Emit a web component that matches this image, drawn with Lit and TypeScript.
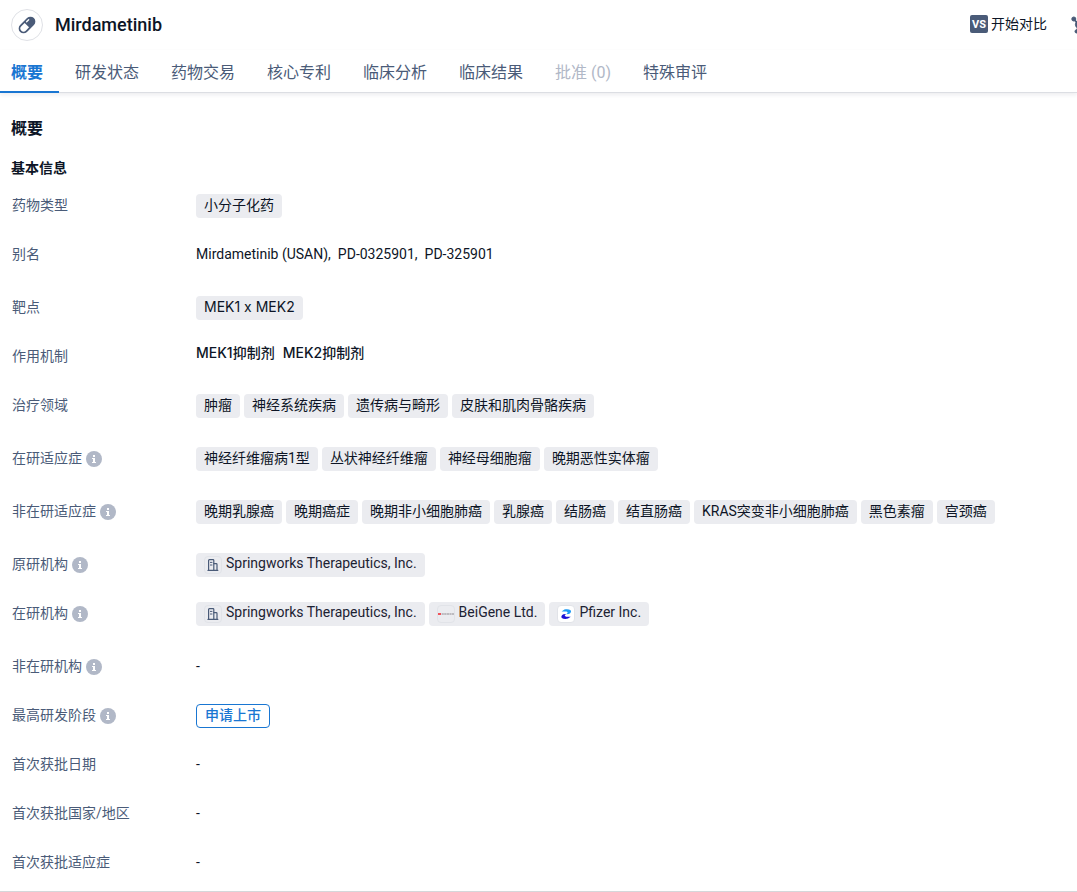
import { LitElement, html, css, svg, nothing, type TemplateResult } from "lit";
import { customElement, property, state } from "lit/decorators.js";
import { classMap } from "lit/directives/class-map.js";

interface Org {
  name: string;
  logo: "building" | "beigene" | "pfizer";
}

interface Row {
  label: string;
  info?: boolean;
  tall?: boolean;
  kind: "tags" | "target" | "text" | "links" | "orgs" | "stage";
  values?: string[];
  orgs?: Org[];
}

const SPRINGWORKS: Org = { name: "Springworks Therapeutics, Inc.", logo: "building" };

const TABS = [
  { label: "概要" },
  { label: "研发状态" },
  { label: "药物交易" },
  { label: "核心专利" },
  { label: "临床分析" },
  { label: "临床结果" },
  { label: "批准 (0)", disabled: true },
  { label: "特殊审评" },
];

const ROWS: Row[] = [
  { label: "药物类型", kind: "tags", values: ["小分子化药"] },
  { label: "别名", kind: "text", tall: true, values: ["Mirdametinib (USAN)", "PD-0325901", "PD-325901"] },
  { label: "靶点", kind: "target", values: ["MEK1 x MEK2"] },
  { label: "作用机制", kind: "links", values: ["MEK1抑制剂", "MEK2抑制剂"] },
  { label: "治疗领域", kind: "tags", tall: true, values: ["肿瘤", "神经系统疾病", "遗传病与畸形", "皮肤和肌肉骨骼疾病"] },
  { label: "在研适应症", info: true, kind: "tags", tall: true, values: ["神经纤维瘤病1型", "丛状神经纤维瘤", "神经母细胞瘤", "晚期恶性实体瘤"] },
  {
    label: "非在研适应症",
    info: true,
    kind: "tags",
    tall: true,
    values: ["晚期乳腺癌", "晚期癌症", "晚期非小细胞肺癌", "乳腺癌", "结肠癌", "结直肠癌", "KRAS突变非小细胞肺癌", "黑色素瘤", "宫颈癌"],
  },
  { label: "原研机构", info: true, kind: "orgs", orgs: [SPRINGWORKS] },
  {
    label: "在研机构",
    info: true,
    kind: "orgs",
    tall: true,
    orgs: [SPRINGWORKS, { name: "BeiGene Ltd.", logo: "beigene" }, { name: "Pfizer Inc.", logo: "pfizer" }],
  },
  { label: "非在研机构", info: true, kind: "text", values: ["-"] },
  { label: "最高研发阶段", info: true, kind: "stage", values: ["申请上市"] },
  { label: "首次获批日期", kind: "text", values: ["-"] },
  { label: "首次获批国家/地区", kind: "text", values: ["-"] },
  { label: "首次获批适应症", kind: "text", values: ["-"] },
];

const LOGOS = {
  building: svg`<g fill="none" stroke="#4a5b78" stroke-width="1.2" stroke-linejoin="round" stroke-linecap="round">
      <path d="M3.6 13.4V3.4Q3.6 2.6 4.4 2.6H8Q8.8 2.6 8.8 3.4V13.4"/><path d="M8.8 6.6H11.2Q12 6.6 12 7.4V13.4"/>
      <path d="M3 13.4H12.8"/><path d="M5.4 5.4H7M5.4 8H7" stroke-width="1"/></g>`,
  beigene: svg`<rect x="0" y="7" width="3" height="2" fill="#f0525a"/>
      <path d="M3.6 8H16" stroke="#8f8a90" stroke-width="1.2" stroke-dasharray="2.2 .4"/>`,
  pfizer: svg`<path d="M3.6 5.6 6.4 3.6C9 3 11.2 3.3 12.6 4.3 13.6 5.6 12.8 7.2 11 8L8.4 8.3 9.8 6.6 8.6 5.4Z" fill="#1d9bf5"/>
      <path d="M12.8 10.8 10 12.6C7.4 13.2 5.2 12.9 3.8 11.9 2.8 10.6 3.6 9 5.4 8.2L8 7.9 6.6 9.6 8 10.8Z" fill="#1b12d6"/>`,
};

@customElement("org-tag")
export class OrgTag extends LitElement {
  static styles = css`
    :host { display: block; }
    .tag {
      display: flex; gap: 4px; height: 24px; padding: 0 8px; box-sizing: border-box;
      border-radius: 4px; background: #ebecf0; color: #1c2233; text-decoration: none;
      font-size: 14px; line-height: 21px; white-space: nowrap;
    }
    .logo {
      box-sizing: border-box; width: 18px; height: 18px; margin-top: 3px;
      border: 1px solid #e1e3e8; border-radius: 4px; flex: none;
    }
    .white { background: #fff; }
    svg { display: block; }
  `;
  @property({ attribute: false }) org: Org = SPRINGWORKS;

  render() {
    return html`<a class="tag" href="#">
      <span class="logo ${classMap({ white: this.org.logo === "pfizer" })}">
        <svg width="16" height="16" viewBox="0 0 16 16" aria-hidden="true">${LOGOS[this.org.logo]}</svg>
      </span><span>${this.org.name}</span></a>`;
  }
}

@customElement("app-root")
export class AppRoot extends LitElement {
  static styles = css`
    :host {
      display: block; background: #fff; color: #0d1526; overflow: hidden;
      font-family: Roboto, "Noto Sans CJK SC", sans-serif; font-size: 14px; line-height: 22px;
    }
    a { color: inherit; text-decoration: none; }
    button { font: inherit; color: inherit; border: 0; background: none; padding: 0; cursor: pointer; }
    .top { display: flex; align-items: center; height: 50px; padding-left: 11px; }
    .avatar {
      box-sizing: border-box; width: 32px; height: 32px; border: 1px solid #dfe1e6;
      border-radius: 50%; display: grid; place-items: center; flex: none;
    }
    .name { margin: 0 auto 0 12px; font-size: 18px; font-weight: 500; line-height: 24px; color: #0d1526; }
    .actions { display: flex; align-items: center; gap: 24px; margin-right: -12px; flex: none; }
    .compare { display: flex; align-items: center; gap: 3px; line-height: 20px; padding-bottom: 2px; }
    .vs {
      width: 18px; height: 18px; border-radius: 2px; background: #4a5b78; color: #fff;
      font-size: 11px; font-weight: 700; line-height: 19px; text-align: center;
    }
    .tabs {
      display: flex; height: 42px; border-bottom: 1px solid #dcdee3;
      box-shadow: 0 2px 4px rgba(20, 30, 60, 0.08);
    }
    .tab {
      box-sizing: border-box; height: 43px; padding: 4px 16px 0; border-bottom: 2px solid transparent;
      font-size: 16px; line-height: 24px; color: #4a5b78; white-space: nowrap;
    }
    .tab:first-child { padding-left: 11px; }
    .tab.active { color: #1976d2; font-weight: 700; border-bottom-color: #1976d2; }
    .tab:disabled { color: #b1b8c7; }
    .section { padding: 24px 12px 0 11px; border-bottom: 1px solid #d5d7da; }
    h2 { margin: 0; font-size: 16px; line-height: 24px; font-weight: 700; }
    h3 { margin: 17px 0 16px; font-size: 14px; line-height: 20px; font-weight: 700; }
    .rows { margin: 0; padding-bottom: 16px; display: flex; flex-direction: column; gap: 25px; }
    .row { display: grid; grid-template-columns: 185px 1fr; min-height: 24px; }
    .tall { padding-bottom: 4px; }
    dt { display: flex; align-items: center; height: 24px; gap: 4px; padding-left: 1px; color: #4a5b78; white-space: nowrap; }
    .label { padding-bottom: 2px; }
    dd { margin: 0; display: flex; flex-wrap: wrap; gap: 4px; align-items: start; }
    .tag { height: 24px; padding: 0 8px; border-radius: 4px; background: #ebecf0; line-height: 23px; white-space: nowrap; }
    .latin { font-family: Inter, "Noto Sans CJK SC", sans-serif; line-height: 22px; }
    .links { gap: 8px; line-height: 16px; font-weight: 500; }
    .text { line-height: 22px; gap: 7px; }
    .stage {
      box-sizing: border-box; height: 24px; padding: 0 8px; border: 1px solid #1976d2; border-radius: 4px;
      color: #1976d2; font-weight: 500; line-height: 21px;
    }
    svg { display: block; }
  `;

  @state() private active = 0;

  private info() {
    return html`<svg width="16" height="16" viewBox="0 0 16 16" role="img" aria-label="说明">
      <circle cx="8" cy="8" r="8" fill="#b1b8c7" />
      <path d="M7 4h2v2H7zM6 7h3v4h1v1H6v-1h1V8H6z" fill="#fff" />
    </svg>`;
  }

  private value(row: Row): TemplateResult {
    const values = row.values ?? [];
    switch (row.kind) {
      case "tags":
        return html`<dd>${values.map((v) => html`<a class="tag" href="#">${v}</a>`)}</dd>`;
      case "target":
        return html`<dd>${values.map((v) => html`<a class="tag latin" href="#">${v}</a>`)}</dd>`;
      case "links":
        return html`<dd class="latin links">${values.map((v) => html`<a href="#">${v}</a>`)}</dd>`;
      case "orgs":
        return html`<dd>${(row.orgs ?? []).map((o) => html`<org-tag .org=${o}></org-tag>`)}</dd>`;
      case "stage":
        return html`<dd>${values.map((v) => html`<span class="stage">${v}</span>`)}</dd>`;
      default:
        return html`<dd class="text">${values.map((v, i) => html`<span>${v}${i < values.length - 1 ? "," : nothing}</span>`)}</dd>`;
    }
  }

  render() {
    return html`
      <header class="top">
        <span class="avatar">
          <svg width="20" height="20" viewBox="0 0 18 18" aria-hidden="true">
            <g transform="rotate(-45 9 9)">
              <rect x="0.2" y="4.6" width="17.6" height="8.8" rx="4.4" fill="#4a5b78" />
              <path d="M8.8 6.2H4.6a2.8 2.8 0 0 0 0 5.6H8.8z" fill="#fff" />
              <path d="M10.8 6.7H13.4" stroke="#fff" stroke-width="1.2" stroke-linecap="round" />
            </g>
          </svg>
        </span>
        <h1 class="name">Mirdametinib</h1>
        <div class="actions">
          <button class="compare"><span class="vs">VS</span>开始对比</button>
          <button aria-label="结构">
            <svg width="18" height="18" viewBox="0 0 18 18" aria-hidden="true">
              <g fill="#4a5b78" stroke="#4a5b78">
                <path d="M2.5 3 8 8.5M8 8.5 5.5 15.5M8 8.5 15 5M8 8.5 14 14" stroke-width="1.6" />
                <circle cx="2.8" cy="3" r="2" /><circle cx="8" cy="8.5" r="3.6" />
                <circle cx="5.6" cy="15.4" r="1.6" /><circle cx="15" cy="5" r="1.8" /><circle cx="14" cy="14" r="1.8" />
              </g>
            </svg>
          </button>
        </div>
      </header>
      <nav class="tabs">
        ${TABS.map(
          (t, i) => html`<button
            class="tab ${classMap({ active: i === this.active })}"
            ?disabled=${t.disabled ?? false}
            @click=${() => (this.active = i)}
          >${t.label}</button>`,
        )}
      </nav>
      <main class="section">
        <h2>概要</h2>
        <h3>基本信息</h3>
        <dl class="rows">
          ${ROWS.map(
            (r) => html`<div class="row ${classMap({ tall: r.tall ?? false })}">
              <dt><span class="label">${r.label}</span>${r.info ? this.info() : nothing}</dt>
              ${this.value(r)}
            </div>`,
          )}
        </dl>
      </main>
    `;
  }
}
